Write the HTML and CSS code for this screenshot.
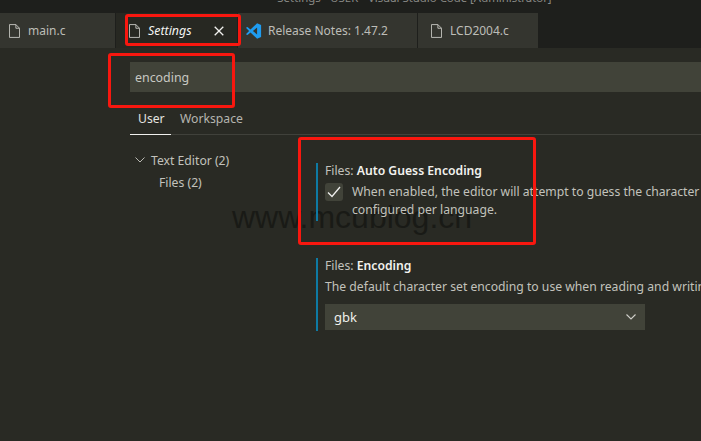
FILE: index.html
```html
<!DOCTYPE html>
<html lang="en">
<head>
<meta charset="utf-8">
<title>Settings</title>
<link rel="stylesheet" href="styles.css">
</head>
<body>
<div class="app">
  <header class="titlebar"><span class="title">Settings - USER - Visual Studio Code [Administrator]</span></header>
  <nav class="tabs">
    <div class="tab tab-main">
      <svg class="file-icon" viewBox="0 0 12 15"><path d="M.5.5h7l4 4v10H.5zM7.5.5v4h4" fill="none" stroke="#c5c5c0"/></svg>
      <span>main.c</span>
    </div>
    <div class="tab tab-settings">
      <svg class="file-icon" viewBox="0 0 12 15"><path d="M.5.5h7l4 4v10H.5zM7.5.5v4h4" fill="none" stroke="#c5c5c0"/></svg>
      <span class="italic">Settings</span>
      <svg class="close-icon" viewBox="0 0 10 10"><path d="M.7.7l8.6 8.6M9.3.7L.7 9.3" fill="none" stroke="#f2f2f0" stroke-width="1.3"/></svg>
    </div>
    <div class="tab tab-notes">
      <svg class="vs-icon" viewBox="0 0 16 16"><path d="M11.6.3L15.6 2v12l-4 1.7L5 9.6l-3 2.5-1.6-.9L3.6 8 .4 4.8 2 3.9l3 2.5zM11.6 4.5L7.4 8l4.2 3.5z" fill="#1f9cf0"/></svg>
      <span>Release Notes: 1.47.2</span>
    </div>
    <div class="tab tab-lcd">
      <svg class="file-icon" viewBox="0 0 12 15"><path d="M.5.5h7l4 4v10H.5zM7.5.5v4h4" fill="none" stroke="#c5c5c0"/></svg>
      <span>LCD2004.c</span>
    </div>
  </nav>
  <main class="editor">
    <div class="search"><span>encoding</span></div>
    <div class="scopes">
      <span class="scope scope-active">User</span>
      <span class="scope">Workspace</span>
    </div>
    <div class="content">
      <aside class="tree">
        <div class="tree-row">
          <svg class="tree-chevron" viewBox="0 0 10 6"><path d="M.5.5L5 5 9.5.5" fill="none" stroke="#b8b8b2"/></svg>
          <span>Text Editor (2)</span>
        </div>
        <div class="tree-row tree-child">Files (2)</div>
      </aside>
      <section class="settings">
        <article class="setting setting-guess">
          <div class="setting-title">Files: <b>Auto Guess Encoding</b></div>
          <div class="check-row">
            <span class="checkbox"><svg viewBox="0 0 14 12"><path d="M1 6.5L5 10.5 13 1" fill="none" stroke="#f0f0ee" stroke-width="1.3"/></svg></span>
            <p class="desc">When enabled, the editor will attempt to guess the character set encoding when opening files. This setting can also be<br>configured per language.</p>
          </div>
        </article>
        <article class="setting setting-encoding">
          <div class="setting-title">Files: <b>Encoding</b></div>
          <p class="desc desc-long">The default character set encoding to use when reading and writing files. This setting can also be configured per language.</p>
          <div class="select">
            <span>gbk</span>
            <svg class="select-chevron" viewBox="0 0 10 6"><path d="M.5.5L5 5 9.5.5" fill="none" stroke="#d0d0ca" stroke-width="1.1"/></svg>
          </div>
        </article>
      </section>
    </div>
  </main>
  <div class="mark mark-tab"></div>
  <div class="mark mark-search"></div>
  <div class="mark mark-setting"></div>
  <div class="watermark">www.mcublog.cn</div>
</div>
</body>
</html>
```
FILE: styles.css
```css
* { box-sizing: border-box; }
html, body { margin: 0; padding: 0; }
body {
  width: 701px;
  height: 441px;
  overflow: hidden;
  background: #272822;
  font-family: "Noto Sans", "Open Sans", sans-serif;
  font-size: 12.2px;
  color: #c2c2bc;
}
.app { position: relative; width: 701px; height: 441px; overflow: hidden; display: flex; flex-direction: column; }

.titlebar { height: 13px; background: #1e1f1c; overflow: hidden; display: flex; justify-content: center; flex: none; padding-left: 128px; }
.title { margin-top: -10px; line-height: 16px; font-size: 11.4px; color: #8a8a86; white-space: nowrap; }

.tabs { height: 35px; flex: none; display: flex; background: #1e1f1c; }
.tab { height: 35px; display: flex; align-items: center; background: #34352f; white-space: nowrap; font-size: 12px; color: #bdbdb8; border-right: 1px solid #1e1f1c; }
.tab-main { width: 116px; padding-left: 9px; }
.tab-settings { width: 122px; padding-left: 13px; background: #272822; color: #f4f4f2; }
.tab-notes { width: 180px; padding-left: 7px; }
.tab-lcd { width: 120px; padding-left: 13px; border-right: 0; }
.italic { font-style: italic; font-size: 12.4px; }
.file-icon { width: 11px; height: 14px; margin-right: 8px; flex: none; }
.close-icon { width: 10px; height: 10px; margin-left: 22px; flex: none; }
.vs-icon { width: 17px; height: 16px; margin-right: 6px; flex: none; }

.editor { flex: 1; display: flex; flex-direction: column; background: #292a24; padding: 14px 0 0 130px; position: relative; }
.search { height: 30px; background: #414339; display: flex; align-items: center; padding-left: 5px; font-size: 12.4px; color: #c8c8c2; }
.scopes { height: 43px; display: flex; align-items: center; border-bottom: 1px solid #40413b; padding-top: 10px; }
.scope { height: 33px; display: flex; align-items: center; color: #b5b5b0; }
.scope-active { width: 41px; padding-left: 8px; color: #e4e4e0; border-bottom: 1px solid #f0f0ee; margin-bottom: -1px; margin-right: 9px; }

.content { display: flex; flex: 1; margin-left: -130px; position: relative; z-index: 1; }
.tree { width: 316px; flex: none; padding: 14px 0 0 135px; }
.tree-row { height: 22px; display: flex; align-items: center; white-space: nowrap; }
.tree-chevron { width: 10px; height: 6px; margin-right: 6px; flex: none; }
.tree-child { padding-left: 24px; }

.settings { flex: 1; min-width: 0; padding-top: 28px; overflow: hidden; }
.setting { border-left: 2px solid #0e7aa3; padding-left: 7px; }
.setting-guess { height: 58px; margin-bottom: 38px; }
.setting-encoding { height: 73px; }
.setting-title { line-height: 16px; color: #c2c2bc; white-space: nowrap; }
.setting-encoding .setting-title { margin-top: -1px; }
.setting-title b { color: #f2f2ee; font-weight: 600; }
.check-row { display: flex; margin-top: 4px; }
.checkbox { width: 18px; height: 18px; background: #414339; border-radius: 3px; flex: none; display: flex; align-items: center; justify-content: center; margin-right: 9px; }
.checkbox svg { width: 14px; height: 12px; }
.desc { margin: 0; line-height: 18px; white-space: nowrap; color: #c2c2bc; }
.desc-long { margin-top: 4px; }
.select { width: 320px; height: 26px; margin-top: 8px; background: #414339; display: flex; align-items: center; justify-content: space-between; padding: 0 9px; font-size: 13px; color: #f0f0ec; }
.select-chevron { width: 10px; height: 6px; }

.mark { position: absolute; border: 3px solid #f8170f; border-radius: 3px; pointer-events: none; z-index: 2; }
.mark-tab { left: 125px; top: 14px; width: 116px; height: 32px; }
.mark-search { left: 108px; top: 53px; width: 127px; height: 55px; }
.mark-setting { left: 298px; top: 137px; width: 238px; height: 108px; }
.watermark { position: absolute; left: 232px; top: 199px; font-family: "Liberation Sans", Arial, sans-serif; font-size: 32px; line-height: 36px; color: #191a16; white-space: nowrap; }
```
